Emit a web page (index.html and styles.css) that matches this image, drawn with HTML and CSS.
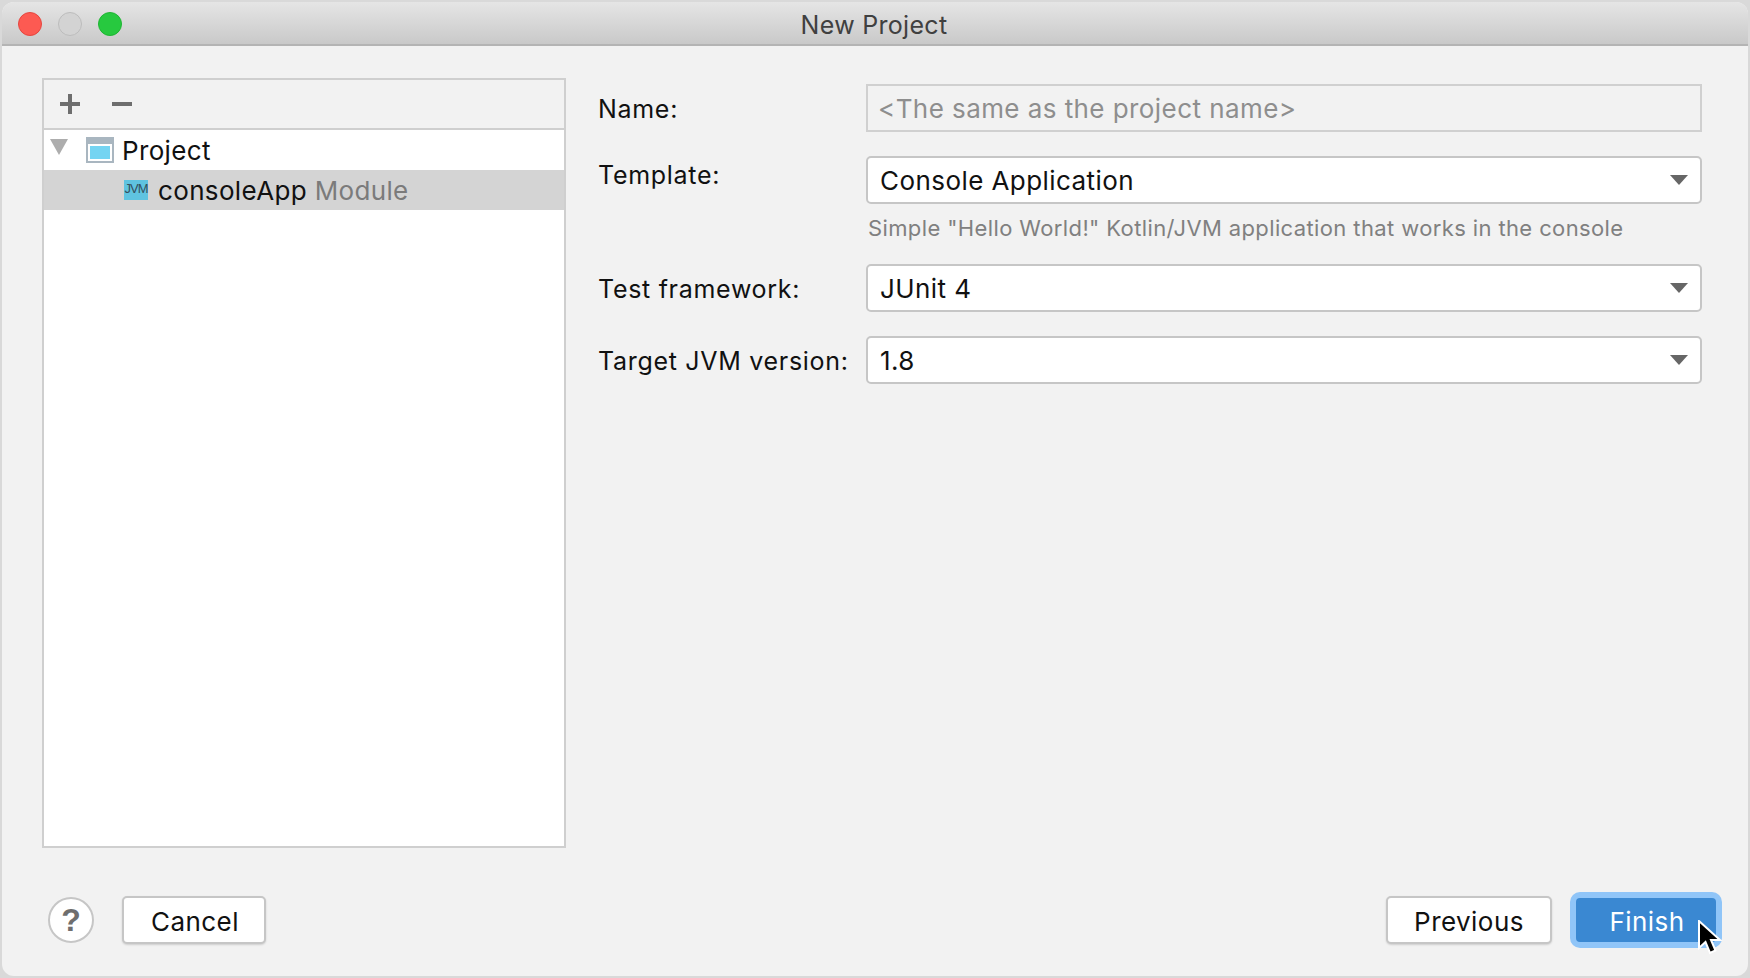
FILE: index.html
```html
<!DOCTYPE html>
<html lang="en">
<head>
<meta charset="utf-8">
<title>New Project</title>
<link rel="stylesheet" href="styles.css">
</head>
<body>
<div class="window">
  <header class="titlebar">
    <div class="lights">
      <span class="light red"></span>
      <span class="light grey"></span>
      <span class="light green"></span>
    </div>
    <div class="title">New Project</div>
  </header>
  <main class="content">
    <section class="tree-panel">
      <div class="toolbar">
        <svg class="tool" width="20" height="20" viewBox="0 0 20 20"><path d="M8 0h4v8h8v4h-8v8h-4v-8h-8v-4h8z" fill="#6e6e6e"/></svg>
        <svg class="tool" width="20" height="20" viewBox="0 0 20 20"><rect x="0" y="8" width="20" height="4" fill="#6e6e6e"/></svg>
      </div>
      <div class="tree">
        <div class="row">
          <svg class="arrow" width="18" height="16" viewBox="0 0 18 16"><path d="M0 0h18l-9 16z" fill="#adadad"/></svg>
          <svg class="project-icon" width="28" height="26" viewBox="0 0 28 26"><rect width="28" height="26" fill="#a9b6c0"/><rect x="2" y="7" width="24" height="17" fill="#fff"/><rect x="4" y="9" width="20" height="13" fill="#74d4f2"/></svg>
          <span class="row-text">Project</span>
        </div>
        <div class="row selected">
          <span class="jvm">JVM</span>
          <span class="row-text">consoleApp <span class="muted">Module</span></span>
        </div>
      </div>
    </section>
    <section class="form">
      <div class="field name-field">
        <label class="label">Name:</label>
        <div class="input">&lt;The same as the project name&gt;</div>
      </div>
      <div class="field template-field">
        <label class="label">Template:</label>
        <div class="combo"><span>Console Application</span><span class="caret"></span></div>
      </div>
      <div class="hint">Simple "Hello World!" Kotlin/JVM application that works in the console</div>
      <div class="field framework-field">
        <label class="label">Test framework:</label>
        <div class="combo"><span>JUnit 4</span><span class="caret"></span></div>
      </div>
      <div class="field jvm-field">
        <label class="label">Target JVM version:</label>
        <div class="combo"><span>1.8</span><span class="caret"></span></div>
      </div>
    </section>
  </main>
  <footer class="footer">
    <button class="help">?</button>
    <button class="btn cancel">Cancel</button>
    <div class="spacer"></div>
    <button class="btn previous">Previous</button>
    <div class="finish-ring"><button class="finish">Finish</button></div>
  </footer>
  <svg class="cursor" width="26" height="36" viewBox="0 0 26 36"><path d="M2 1v27l6.500-6 4.500 11 5.500-2.500-4.500-10.500h9z" fill="#000" stroke="#fff" stroke-width="2"/></svg>
</div>
</body>
</html>
```
FILE: styles.css
```css
* { box-sizing: border-box; }
html, body { margin: 0; padding: 0; }
body {
  width: 1750px;
  height: 978px;
  background: #d9d9d9;
  font-family: Inter, "Liberation Sans", sans-serif;
  color: #111;
  overflow: hidden;
}
.window {
  position: relative;
  width: 1746px;
  height: 974px;
  margin: 2px;
  background: #f2f2f2;
  border-radius: 12px;
  overflow: hidden;
  display: flex;
  flex-direction: column;
}
.titlebar {
  position: relative;
  height: 44px;
  flex: none;
  background: linear-gradient(#e5e5e5, #c9c9c9);
  border-bottom: 2px solid #b4b4b4;
  display: flex;
  align-items: center;
  justify-content: center;
}
.lights {
  position: absolute;
  left: 16px;
  top: 10px;
  display: flex;
  gap: 16px;
}
.light {
  width: 24px;
  height: 24px;
  border-radius: 50%;
  border: 1px solid;
}
.red { background: #fd5a52; border-color: #e5463f; }
.grey { background: #d3d3d3; border-color: #bcbcbc; }
.green { background: #27c93f; border-color: #1fb533; }
.title {
  font-size: 25px;
  color: #404040;
  letter-spacing: 0.3px;
  margin: 4px 2px 0 0;
}
.content {
  flex: 1;
  min-height: 0;
  display: flex;
  padding: 32px 0 0 40px;
}
.tree-panel {
  width: 524px;
  height: 770px;
  flex: none;
  border: 2px solid #cfcfcf;
  background: #fff;
  display: flex;
  flex-direction: column;
}
.toolbar {
  height: 50px;
  flex: none;
  background: #f2f2f2;
  border-bottom: 2px solid #cfcfcf;
  display: flex;
  align-items: center;
  padding: 0 0 0 16px;
  gap: 32px;
}
.tree { font-size: 26px; letter-spacing: 0.35px; }
.row {
  height: 40px;
  display: flex;
  align-items: center;
  position: relative;
}
.arrow { margin: -6px 0 0 6px; }
.project-icon { margin: 0 0 0 18px; }
.row:first-child .row-text { margin-left: 8px; }
.selected { background: #d4d4d4; padding-left: 80px; }
.selected .row-text { margin-left: 10px; }
.jvm {
  width: 24px;
  height: 20px;
  background: #5fc3e0;
  color: #34505e;
  font-family: "Liberation Sans", sans-serif;
  font-size: 13px;
  line-height: 18px;
  text-align: center;
  letter-spacing: -1px;
}
.muted { color: #7b7b7b; }
.form {
  flex: 1;
  padding: 6px 46px 0 32px;
}
.field {
  display: flex;
  align-items: center;
}
.label {
  width: 268px;
  flex: none;
  padding-top: 2px;
  font-size: 25px;
  letter-spacing: 0.7px;
  color: #111;
}
.input, .combo {
  flex: 1;
  height: 48px;
  font-size: 26px;
  letter-spacing: 0.43px;
  display: flex;
  align-items: center;
}
.input {
  border: 2px solid #d0d0d0;
  padding-left: 10px;
  color: #8e8e8e;
}
.combo {
  background: #fff;
  border: 2px solid #c6c6c6;
  border-radius: 5px;
  padding: 0 12px 0 12px;
  justify-content: space-between;
}
.caret {
  width: 0;
  height: 0;
  border-left: 9px solid transparent;
  border-right: 9px solid transparent;
  border-top: 10px solid #666;
}
.template-field { margin-top: 24px; }
.template-field .label { margin-top: -12px; }
.hint {
  margin: 11px 0 0 270px;
  font-size: 22px;
  letter-spacing: 0.38px;
  line-height: 27px;
  color: #808080;
}
.framework-field { margin-top: 22px; }
.jvm-field { margin-top: 24px; }
.footer {
  height: 56px;
  flex: none;
  margin-bottom: 28px;
  display: flex;
  align-items: center;
  padding: 0 26px 0 46px;
  font-size: 26px;
  letter-spacing: 0.45px;
}
.help {
  width: 46px;
  height: 46px;
  padding: 0;
  border: 2px solid #c6c6c6;
  border-radius: 50%;
  background: #fff;
  color: #6e6e6e;
  font: 700 32px "Liberation Sans", sans-serif;
}
.btn {
  height: 48px;
  background: #fff;
  border: 2px solid #c6c6c6;
  border-radius: 5px;
  box-shadow: 0 1px 2px rgba(0,0,0,.15);
  color: #111;
  font: inherit;
  letter-spacing: inherit;
  padding: 2px 0 0;
}
.cancel { width: 144px; margin-left: 28px; padding-left: 2px; }
.spacer { flex: 1; }
.previous { width: 166px; }
.finish-ring {
  margin-left: 18px;
  width: 152px;
  height: 56px;
  padding: 6px;
  border-radius: 10px;
  background: #90c5f8;
}
.finish {
  display: block;
  width: 100%;
  height: 100%;
  border: 0;
  padding: 2px 0 0 2px;
  border-radius: 4px;
  background: #3a88d2;
  color: #fff;
  font: inherit;
  letter-spacing: inherit;
}
.cursor {
  position: absolute;
  left: 1695px;
  top: 918px;
}
```
